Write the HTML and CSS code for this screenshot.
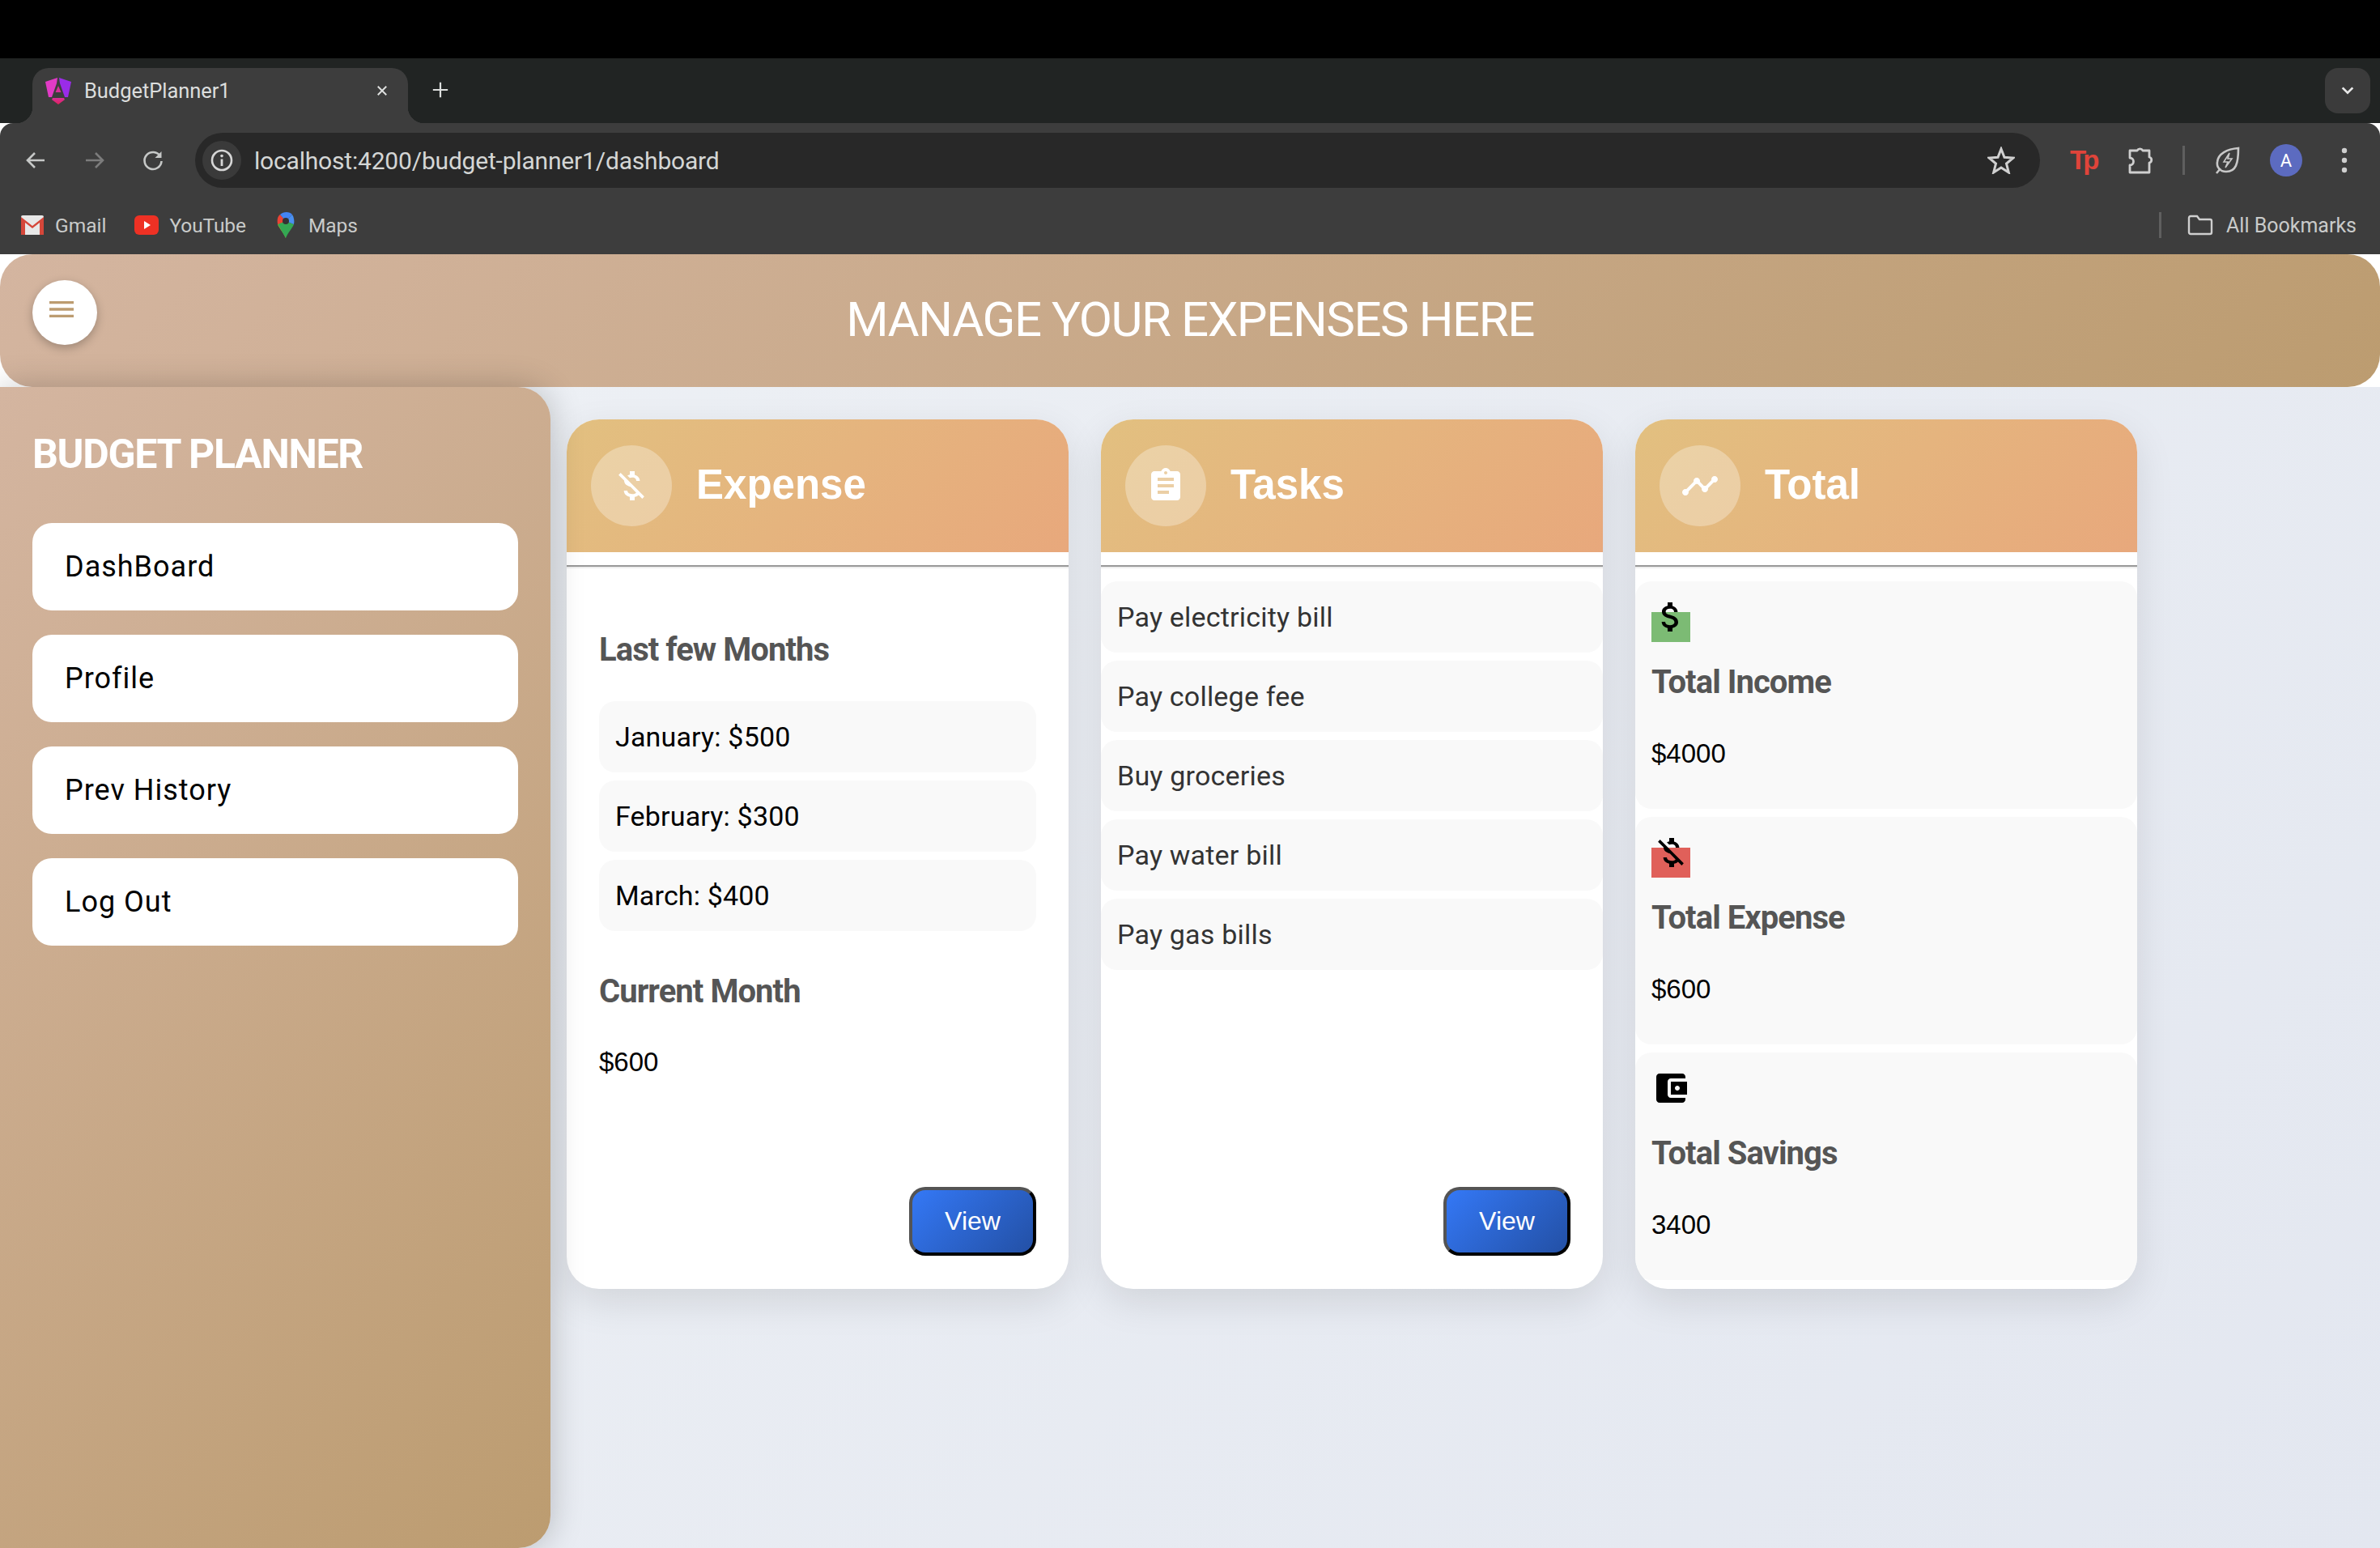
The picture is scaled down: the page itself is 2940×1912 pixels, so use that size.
FILE: index.html
```html
<!DOCTYPE html>
<html lang="en">
<head>
<meta charset="utf-8">
<title>BudgetPlanner1</title>
<link rel="stylesheet" href="styles.css">
</head>
<body>
<div class="blackbar"></div>
<div class="tabstrip">
  <div class="tab">
    <svg class="favicon" viewBox="0 0 32 34">
      <defs><linearGradient id="ng2" x1="0" y1="0" x2="0" y2="1"><stop offset="0" stop-color="#d8309a"/><stop offset="1" stop-color="#e0205a"/></linearGradient></defs>
      <path d="M15 1 L0 6 L4 25 L8 25 L14 8 Z" fill="#e23bc6"/>
      <path d="M17 1 L32 6 L28 25 L24 25 L18 8 Z" fill="#9a2ce8"/>
      <path d="M12.5 19 L16 11 L19.5 19 Z" fill="#d8309a"/>
      <path d="M9 26 H23 L24 28 L16 34 L8 28 Z" fill="url(#ng2)"/>
    </svg>
    <span class="tab-title">BudgetPlanner1</span>
    <svg class="tab-close" viewBox="0 0 16 16"><path d="M2 2 L14 14 M14 2 L2 14" stroke="#dfe1e0" stroke-width="2.2" fill="none"/></svg>
  </div>
  <svg class="tab-new" viewBox="0 0 24 24"><path d="M12 2 V22 M2 12 H22" stroke="#dcdedd" stroke-width="2.4" fill="none"/></svg>
  <div class="tab-search"><svg viewBox="0 0 20 20" class="tab-chev"><path d="M3 6 L10 13 L17 6" stroke="#e8e8e8" stroke-width="3" fill="none"/></svg></div>
</div>
<div class="toolbar">
  <svg class="tool back" viewBox="0 0 28 28"><path d="M25 14 H5 M13 5 L4 14 L13 23" stroke="#c6c8c7" stroke-width="2.6" fill="none"/></svg>
  <svg class="tool fwd" viewBox="0 0 28 28"><path d="M3 14 H23 M15 5 L24 14 L15 23" stroke="#7c7c7c" stroke-width="2.6" fill="none"/></svg>
  <svg class="tool reload" viewBox="0 0 28 28"><path d="M23 9 A10.5 10.5 0 1 0 24.5 15" stroke="#c6c8c7" stroke-width="2.6" fill="none"/><path d="M24.5 3 V11 H16.5 Z" fill="#c6c8c7"/></svg>
  <div class="omnibox">
    <div class="info-bubble"><svg viewBox="0 0 28 28" class="info-icon"><circle cx="14" cy="14" r="12" stroke="#d6d6d6" stroke-width="2.6" fill="none"/><path d="M14 12.5 V21" stroke="#d6d6d6" stroke-width="2.8"/><circle cx="14" cy="8.6" r="1.8" fill="#d6d6d6"/></svg></div>
    <span class="url">localhost:4200/budget-planner1/dashboard</span>
    <svg class="star" viewBox="0 0 34 34"><path d="M17 3 L21 13.2 L32 14 L23.5 21 L26.3 32 L17 26 L7.7 32 L10.5 21 L2 14 L13 13.2 Z" stroke="#d0d0d0" stroke-width="3" fill="none"/></svg>
  </div>
  <span class="ext-tp">Tp</span>
  <svg class="puzzle" viewBox="0 0 32 36"><path d="M3 6 H12 A4 4 0 0 1 19 6 H27 V14 A3.6 3.6 0 0 1 27 21 V33 H3 V24 A4.5 4.5 0 0 0 3 15 Z" stroke="#cfcfcf" stroke-width="2.8" fill="none" stroke-linejoin="round"/></svg>
  <div class="tool-sep"></div>
  <svg class="leaf" viewBox="0 0 32 36"><path d="M29 3 C29 22 26 32 14 32 C6 32 2 26 3 20 C4 10 15 4 29 3 Z M2 34 L7 28" stroke="#c8c8c8" stroke-width="2.6" fill="none"/><path d="M18 9 L11 20 H16 L13 27 L21 16 H16 Z" stroke="#c8c8c8" stroke-width="1.6" fill="none"/></svg>
  <div class="avatar">A</div>
  <svg class="dots" viewBox="0 0 8 34"><circle cx="4" cy="5" r="3.2" fill="#cfcfcf"/><circle cx="4" cy="17" r="3.2" fill="#cfcfcf"/><circle cx="4" cy="29" r="3.2" fill="#cfcfcf"/></svg>
</div>
<div class="bookmarks">
  <svg class="bm-gmail" viewBox="0 0 28 24"><rect width="28" height="24" rx="2" fill="#e8e8e8"/><path d="M0 2 L14 13 L28 2 V24 H23 V9 L14 16 L5 9 V24 H0 Z" fill="#d5473a"/></svg>
  <span class="bm-text gmail-text">Gmail</span>
  <svg class="bm-yt" viewBox="0 0 30 24"><rect width="30" height="24" rx="6" fill="#ee3124"/><path d="M12 7 L20 12 L12 17 Z" fill="#fff"/></svg>
  <span class="bm-text yt-text">YouTube</span>
  <svg class="bm-maps" viewBox="0 0 22 32">
    <path d="M11 32 C8 25 3 20 1 15 L11 11 Z" fill="#fbbc04"/>
    <path d="M11 32 C14 25 19 20 21 15 L11 11 L1 15 Z" fill="#34a853"/>
    <path d="M1 15 C0 9 1 5 4 3 L11 11 Z" fill="#ea4335"/>
    <path d="M4 3 C8 -1 16 -1 19 3 L11 11 Z" fill="#4285f4"/>
    <path d="M19 3 C21 6 22 11 21 15 L11 11 Z" fill="#4a90f0"/>
    <circle cx="11" cy="11" r="4" fill="#333"/>
  </svg>
  <span class="bm-text maps-text">Maps</span>
  <div class="bm-sep"></div>
  <svg class="bm-folder" viewBox="0 0 32 26"><path d="M2 4 A2 2 0 0 1 4 2 H12 L15 6 H28 A2 2 0 0 1 30 8 V22 A2 2 0 0 1 28 24 H4 A2 2 0 0 1 2 22 Z" stroke="#cfcfcf" stroke-width="2.4" fill="none"/></svg>
  <span class="bm-text all-text">All Bookmarks</span>
</div>

<div class="app">
  <header class="topbar">
    <button class="menu-btn"><svg viewBox="0 0 24 24" class="menu-icon"><path d="M3 18h18v-2H3v2zm0-5h18v-2H3v2zm0-7v2h18V6H3z"/></svg></button>
    <h1 class="topbar-title">MANAGE YOUR EXPENSES HERE</h1>
  </header>
  <div class="content">
    <aside class="sidebar">
      <h2 class="brand">BUDGET PLANNER</h2>
      <nav class="nav">
        <a class="nav-item">DashBoard</a>
        <a class="nav-item">Profile</a>
        <a class="nav-item">Prev History</a>
        <a class="nav-item">Log Out</a>
      </nav>
    </aside>
    <main class="cards">
      <section class="card">
        <div class="card-head">
          <div class="head-circle"><svg viewBox="0 0 24 24" class="head-icon"><path d="M12.5 6.9c1.78 0 2.44.85 2.5 2.1h2.21c-.07-1.72-1.12-3.3-3.21-3.81V3h-3v2.16c-.53.12-1.03.3-1.48.54l1.47 1.47c.41-.17.91-.27 1.51-.27zM5.33 4.06L4.06 5.33 7.5 8.77c0 2.08 1.56 3.21 3.91 3.91l3.51 3.51c-.34.48-1.05.91-2.42.91-2.06 0-2.87-.92-2.98-2.1h-2.2c.12 2.19 1.76 3.42 3.68 3.83V21h3v-2.15c.96-.18 1.82-.55 2.45-1.12l2.22 2.22 1.27-1.27L5.33 4.06z"/></svg></div>
          <h2 class="card-title">Expense</h2>
        </div>
        <hr class="rule">
        <div class="expense-body">
          <h3 class="sub first-sub">Last few Months</h3>
          <ul class="list">
            <li class="list-item">January: $500</li>
            <li class="list-item">February: $300</li>
            <li class="list-item">March: $400</li>
          </ul>
          <h3 class="sub current-sub">Current Month</h3>
          <p class="amount current-amount">$600</p>
        </div>
        <button class="view-btn">View</button>
      </section>
      <section class="card">
        <div class="card-head">
          <div class="head-circle"><svg viewBox="0 0 24 24" class="head-icon"><path d="M19 3h-4.18C14.4 1.84 13.3 1 12 1c-1.3 0-2.4.84-2.82 2H5c-1.1 0-2 .9-2 2v14c0 1.1.9 2 2 2h14c1.1 0 2-.9 2-2V5c0-1.1-.9-2-2-2zm-7 0c.55 0 1 .45 1 1s-.45 1-1 1-1-.45-1-1 .45-1 1-1zm2 14H7v-2h7v2zm3-4H7v-2h10v2zm0-4H7V7h10v2z"/></svg></div>
          <h2 class="card-title">Tasks</h2>
        </div>
        <hr class="rule">
        <ul class="tasks">
          <li class="task">Pay electricity bill</li>
          <li class="task">Pay college fee</li>
          <li class="task">Buy groceries</li>
          <li class="task">Pay water bill</li>
          <li class="task">Pay gas bills</li>
        </ul>
        <button class="view-btn">View</button>
      </section>
      <section class="card">
        <div class="card-head">
          <div class="head-circle"><svg viewBox="0 0 24 24" class="head-icon"><path d="M23 8c0 1.1-.9 2-2 2-.18 0-.35-.02-.51-.07l-3.56 3.55c.05.16.07.34.07.52 0 1.1-.9 2-2 2s-2-.9-2-2c0-.18.02-.36.07-.52l-2.55-2.55c-.16.05-.34.07-.52.07s-.36-.02-.52-.07l-4.55 4.56c.05.16.07.33.07.51 0 1.1-.9 2-2 2s-2-.9-2-2 .9-2 2-2c.18 0 .35.02.51.07l4.56-4.55C8.02 9.36 8 9.18 8 9c0-1.1.9-2 2-2s2 .9 2 2c0 .18-.02.36-.07.52l2.55 2.55c.16-.05.34-.07.52-.07s.36.02.52.07l3.55-3.56C19.02 8.35 19 8.18 19 8c0-1.1.9-2 2-2s2 .9 2 2z"/></svg></div>
          <h2 class="card-title">Total</h2>
        </div>
        <hr class="rule">
        <div class="stats">
          <div class="stat">
            <div class="stat-glyph glyph-green"><svg viewBox="0 0 24 24" class="stat-icon"><path d="M11.8 10.9c-2.27-.59-3-1.2-3-2.15 0-1.09 1.01-1.85 2.7-1.85 1.78 0 2.44.85 2.5 2.1h2.21c-.07-1.72-1.12-3.3-3.21-3.81V3h-3v2.16c-1.94.42-3.5 1.68-3.5 3.61 0 2.31 1.91 3.46 4.7 4.13 2.5.6 3 1.48 3 2.41 0 .69-.49 1.79-2.7 1.79-2.06 0-2.87-.92-2.98-2.1h-2.2c.12 2.19 1.76 3.42 3.68 3.83V21h3v-2.15c1.95-.37 3.5-1.5 3.5-3.55 0-2.84-2.43-3.81-4.7-4.4z"/></svg></div>
            <h3 class="sub stat-title">Total Income</h3>
            <p class="amount">$4000</p>
          </div>
          <div class="stat">
            <div class="stat-glyph glyph-red"><svg viewBox="0 0 24 24" class="stat-icon"><path d="M12.5 6.9c1.78 0 2.44.85 2.5 2.1h2.21c-.07-1.72-1.12-3.3-3.21-3.81V3h-3v2.16c-.53.12-1.03.3-1.48.54l1.47 1.47c.41-.17.91-.27 1.51-.27zM5.33 4.06L4.06 5.33 7.5 8.77c0 2.08 1.56 3.21 3.91 3.91l3.51 3.51c-.34.48-1.05.91-2.42.91-2.06 0-2.87-.92-2.98-2.1h-2.2c.12 2.19 1.76 3.42 3.68 3.83V21h3v-2.15c.96-.18 1.82-.55 2.45-1.12l2.22 2.22 1.27-1.27L5.33 4.06z"/></svg></div>
            <h3 class="sub stat-title">Total Expense</h3>
            <p class="amount">$600</p>
          </div>
          <div class="stat">
            <div class="stat-glyph"><svg viewBox="0 0 24 24" class="stat-icon"><path d="M21 18v1c0 1.1-.9 2-2 2H5c-1.11 0-2-.9-2-2V5c0-1.1.89-2 2-2h14c1.1 0 2 .9 2 2v1h-9c-1.11 0-2 .9-2 2v8c0 1.1.89 2 2 2h9zm-9-2h10V8H12v8zm4-2.5c-.83 0-1.5-.67-1.5-1.5s.67-1.5 1.5-1.5 1.5.67 1.5 1.5-.67 1.5-1.5 1.5z"/></svg></div>
            <h3 class="sub stat-title">Total Savings</h3>
            <p class="amount">3400</p>
          </div>
        </div>
      </section>
    </main>
  </div>
</div>
</body>
</html>
```
FILE: styles.css
```css
* { box-sizing: border-box; }
html, body { margin: 0; padding: 0; height: 1912px; overflow: hidden; }
body { width: 2940px; display: flex; flex-direction: column; background: #fff; font-family: Roboto, "Liberation Sans", sans-serif; }

.blackbar { height: 72px; background: #000; flex: none; }

.tabstrip { height: 80px; flex: none; background: #212423; display: flex; align-items: flex-start; padding: 12px 12px 0 40px; }
.tab { position: relative; width: 464px; height: 68px; background: #3d3d3d; border-radius: 20px 20px 0 0; display: flex; align-items: center; padding: 0 0 13px 16px; }
.tab::before, .tab::after { content: ""; position: absolute; bottom: 0; width: 20px; height: 20px; }
.tab::before { left: -20px; background: radial-gradient(circle at 0 0, transparent 20px, #3d3d3d 20.5px); }
.tab::after { right: -20px; background: radial-gradient(circle at 100% 0, transparent 20px, #3d3d3d 20.5px); }
.favicon { width: 32px; height: 34px; flex: none; }
.tab-title { margin-left: 16px; font-size: 25.5px; letter-spacing: -.05px; color: #dcdedd; flex: 1; white-space: nowrap; }
.tab-close { width: 16px; height: 14px; margin-right: 24px; flex: none; }
.tab-new { width: 22px; height: 22px; margin: 16px 0 0 29px; flex: none; }
.tab-search { width: 56px; height: 56px; margin-left: auto; border-radius: 16px; background: #3b3b3b; display: flex; align-items: center; justify-content: center; }
.tab-chev { width: 18px; height: 18px; }

.toolbar { height: 96px; flex: none; background: #3d3d3d; border-radius: 16px 16px 0 0; display: flex; align-items: center; padding: 0 0 4px 30px; }
.tool { width: 28px; height: 28px; flex: none; }
.fwd { margin-left: 45px; }
.reload { margin-left: 44px; }
.omnibox { width: 2279px; height: 68px; margin-left: 38px; border-radius: 34px; background: #282828; display: flex; align-items: center; padding-left: 9px; flex: none; }
.info-bubble { width: 48px; height: 48px; border-radius: 50%; background: #3a3a3a; display: flex; align-items: center; justify-content: center; flex: none; }
.info-icon { width: 28px; height: 28px; }
.url { margin-left: 16px; font-size: 30px; letter-spacing: -.19px; color: #d4d6d5; white-space: nowrap; flex: 1; }
.star { width: 34px; height: 34px; margin-right: 31px; flex: none; }
.ext-tp { margin-left: 37px; width: 36px; font-family: "Liberation Sans", sans-serif; font-weight: 700; font-size: 33px; line-height: 34px; color: #e0443a; letter-spacing: -4px; flex: none; white-space: nowrap; }
.puzzle { width: 32px; height: 36px; margin-left: 35px; flex: none; }
.tool-sep { width: 3px; height: 36px; margin-left: 36px; background: #5f5f5f; flex: none; }
.leaf { width: 32px; height: 36px; margin-left: 37px; flex: none; }
.avatar { width: 40px; height: 40px; margin-left: 36px; border-radius: 50%; background: #5c6bc0; color: #fff; font-size: 22px; display: flex; align-items: center; justify-content: center; flex: none; }
.dots { width: 8px; height: 34px; margin-left: 48px; flex: none; }

.bookmarks { height: 66px; flex: none; background: #3d3d3d; display: flex; align-items: center; padding: 0 0 6px 26px; }
.bm-gmail { width: 28px; height: 24px; flex: none; }
.bm-text { font-size: 24.5px; color: #c9cbca; white-space: nowrap; flex: none; }
.gmail-text { margin-left: 14px; }
.bm-yt { width: 30px; height: 24px; margin-left: 35px; flex: none; }
.yt-text { margin-left: 13px; letter-spacing: -.1px; }
.bm-maps { width: 22px; height: 32px; margin-left: 38px; flex: none; }
.maps-text { margin-left: 17px; }
.bm-sep { width: 3px; height: 32px; background: #5f5f5f; margin-left: auto; flex: none; }
.bm-folder { width: 32px; height: 26px; margin-left: 32px; flex: none; }
.all-text { margin-left: 16px; margin-right: 29px; font-size: 25px; }

.app { flex: 1; min-height: 0; display: flex; flex-direction: column; }
.topbar { position: relative; height: 164px; flex: none; border-radius: 40px; background: linear-gradient(135deg, #d4b5a0 0%, #bc9c70 100%); display: flex; align-items: center; justify-content: center; padding-bottom: 3px; }
.menu-btn { position: absolute; left: 40px; top: 32px; width: 80px; height: 80px; border: 0; border-radius: 50%; background: #fff; box-shadow: 0 4px 12px rgba(0,0,0,.25); padding: 0 0 8px 16px; }
.menu-icon { display: block; width: 40px; height: 40px; fill: #bc9c70; }
.topbar-title { margin: 0; font-size: 60px; font-weight: 400; letter-spacing: -1.45px; color: #fff; }

.content { flex: 1; min-height: 0; display: flex; background: linear-gradient(135deg, #eef1f5, #e3e7f0); }
.sidebar { position: relative; width: 680px; flex: none; padding: 40px; border-radius: 0 40px 40px 0; background: linear-gradient(135deg, #d4b5a0 0%, #bc9c70 100%); box-shadow: 0 0 40px rgba(0,0,0,.22); }
.brand { margin: 14px 0 0; font-size: 50px; font-weight: 700; color: #fff; line-height: 59px; letter-spacing: -1.3px; }
.nav { display: flex; flex-direction: column; gap: 30px; margin-top: 55px; }
.nav-item { height: 108px; background: #fff; border-radius: 24px; display: flex; align-items: center; padding-left: 40px; font-size: 36px; letter-spacing: 1px; color: #000; }

.cards { display: flex; align-items: flex-start; gap: 40px; padding: 40px 0 0 20px; }
.card { width: 620px; height: 1074px; background: #fff; border-radius: 40px; box-shadow: 0 16px 48px rgba(0,0,0,.1); display: flex; flex-direction: column; overflow: hidden; }
.card-head { height: 164px; flex: none; display: flex; align-items: center; padding-left: 30px; background: linear-gradient(135deg, #e2c080 0%, #e8a87c 100%); }
.head-circle { width: 100px; height: 100px; border-radius: 50%; background: rgba(255,255,255,.3); display: flex; align-items: center; justify-content: center; flex: none; }
.head-icon { width: 48px; height: 48px; fill: #fff; }
.card-title { margin: 0 0 3px 30px; font-family: "Liberation Sans", sans-serif; font-size: 51px; font-weight: 700; color: #fff; }
.rule { margin: 16px 0; height: 4px; border: 0; border-top: 2px solid #999; border-bottom: 2px solid #eee; flex: none; }

.expense-body { flex: 1; padding: 0 40px; }
.sub { margin: 0; font-size: 40px; line-height: 49px; font-weight: 700; letter-spacing: -.95px; color: #555; }
.first-sub { margin-top: 60px; }
.list, .tasks { list-style: none; margin: 0; padding: 0; }
.list { margin-top: 39px; display: flex; flex-direction: column; gap: 10px; }
.list-item { height: 88px; background: #f9f9f9; border-radius: 20px; display: flex; align-items: center; padding-left: 20px; font-size: 34px; letter-spacing: .17px; color: #000; }
.current-sub { margin-top: 50px; }
.amount { margin: 0; font-family: "Liberation Sans", sans-serif; font-size: 33px; color: #000; }
.current-amount { margin-top: 44px; }

.tasks { flex: 1; display: flex; flex-direction: column; gap: 10px; }
.task { height: 88px; background: #f9f9f9; border-radius: 20px; display: flex; align-items: center; padding-left: 20px; font-size: 34px; letter-spacing: .2px; color: #333; }

.view-btn { align-self: flex-end; flex: none; width: 157px; height: 85px; margin: 0 40px 41px 0; border: 4px outset #000; border-radius: 20px; background: linear-gradient(135deg, #3478f6, #2350a5); color: #fff; font-family: "Liberation Sans", sans-serif; font-size: 32px; padding: 0; }

.stats { display: flex; flex-direction: column; gap: 10px; }
.stat { height: 281px; background: #f9f9f9; border-radius: 20px; padding: 20px; }
.stat-glyph { width: 48px; height: 55px; margin-bottom: -7px; }
.glyph-green { background: linear-gradient(#7cbb74, #7cbb74) 0 18px / 48px 37px no-repeat; }
.glyph-red { background: linear-gradient(#e0605a, #e0605a) 0 18px / 48px 37px no-repeat; }
.stat-icon { display: block; width: 48px; height: 48px; fill: #000; }
.stat-title { margin-top: 32px; }
.stat .amount { margin-top: 45px; }
```
